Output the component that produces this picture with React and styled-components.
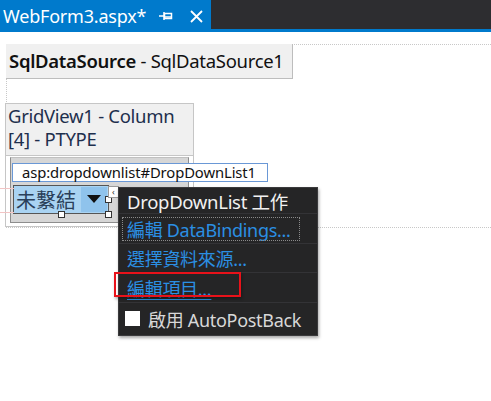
import React from "react";
import styled, { createGlobalStyle } from "styled-components";

const GlobalStyle = createGlobalStyle`
  html, body {
    margin: 0;
    padding: 0;
    background: #ffffff;
    font-family: "Noto Sans", "Noto Sans CJK TC", sans-serif;
  }
  #root {
    width: 491px;
    height: 401px;
    overflow: hidden;
  }
`;

const TabBar = styled.div`
  display: flex;
  height: 29px;
  background: #2d2d30;
`;

const Tab = styled.div`
  display: flex;
  align-items: center;
  width: 208px;
  padding-left: 3px;
  background: #007acc;
  color: #ffffff;
  font-size: 18px;
  letter-spacing: -0.2px;
`;

const TabTitle = styled.span`
  flex: 1;
  margin-top: 3px;
`;

const TabIcon = styled.span`
  display: flex;
  align-items: center;
  justify-content: center;
  width: ${(p) => p.w}px;
  height: 29px;
  margin-top: 3px;
`;

const BlueLine = styled.div`
  height: 3px;
  background: #007acc;
`;

const Surface = styled.div`
  position: relative;
  height: 369px;
  padding-top: 12px;
  box-sizing: border-box;
`;

const PageBody = styled.div`
  margin-left: 6px;
  height: 182px;
  border-top: 1px dotted #c8c8c8;
  border-left: 1px dotted #c8c8c8;
  border-bottom: 1px dotted #c8c8c8;
  display: flex;
  flex-direction: column;
  align-items: flex-start;
`;

const DataSourceBox = styled.div`
  margin: -1px 0 0 -1px;
  width: 283px;
  height: 34px;
  padding-left: 3px;
  display: flex;
  align-items: center;
  background: #f0f0f0;
  border-right: 1px solid #bdbdbd;
  border-bottom: 1px solid #bdbdbd;
  color: #111111;
  font-size: 18.5px;
  letter-spacing: -0.3px;
  white-space: nowrap;
  b {
    font-weight: 600;
  }
`;

const GridBox = styled.div`
  margin: 24px 0 0 -2px;
  width: 187px;
  height: 123px;
  border: 1px solid #c6c6c6;
  background: #ffffff;
  display: flex;
  flex-direction: column;
`;

const GridHeader = styled.div`
  height: 51px;
  padding: 0 0 0 2px;
  background: #f0f0f0;
  border-bottom: 1px solid #c6c6c6;
  color: #1e2f4d;
  font-size: 18.5px;
  line-height: 23px;
  letter-spacing: -0.3px;
  white-space: nowrap;
`;

const GridCell = styled.div`
  margin: 1px 4px 0 4px;
  height: 64px;
  background: #d6d6d6;
  border: 1px solid #8d8d8d;
  border-top-color: #c0c0c0;
  position: relative;
`;

const Dropdown = styled.div`
  position: absolute;
  left: 2px;
  top: 27px;
  width: 94px;
  height: 27px;
  border: 1px solid #555555;
  background: #a9d3f2;
  display: flex;
  align-items: center;
`;

const DropText = styled.span`
  flex: 1;
  padding-left: 2px;
  color: #2a3f5a;
  font-size: 20px;
  font-family: "Noto Sans CJK TC", sans-serif;
  line-height: 25px;
`;

const DropArrow = styled.span`
  width: 26px;
  height: 25px;
  margin-right: 1px;
  background: #8fc3ec;
  display: flex;
  align-items: center;
  justify-content: center;
`;

const Handle = styled.span`
  position: absolute;
  width: 5px;
  height: 5px;
  background: #ffffff;
  border: 1px solid #333333;
  left: ${(p) => p.x}px;
  top: ${(p) => p.y}px;
`;

const GuideLine = styled.div`
  position: absolute;
  left: 0;
  width: 14px;
  height: 1px;
  background: #f2c4c4;
  top: ${(p) => p.y}px;
`;

const Tooltip = styled.div`
  position: absolute;
  left: 12px;
  top: 131px;
  width: 256px;
  height: 19px;
  padding-left: 9px;
  box-sizing: border-box;
  background: #ffffff;
  border: 1px solid #6a98d6;
  font-size: 14.8px;
  line-height: 17px;
  letter-spacing: -0.1px;
  color: #111111;
  white-space: nowrap;
`;

const SmartTag = styled.div`
  position: absolute;
  left: 108px;
  top: 154px;
  width: 9px;
  height: 10px;
  background: #ffffff;
  border: 1px solid #9a9a9a;
  font-size: 9px;
  line-height: 9px;
  text-align: center;
  color: #333333;
`;

const Menu = styled.div`
  position: absolute;
  left: 118px;
  top: 155px;
  width: 198px;
  background: #252526;
  border: 1px solid #3a3a3c;
  box-shadow: 1px 2px 3px rgba(0, 0, 0, 0.35);
  display: flex;
  flex-direction: column;
  padding-bottom: 1px;
`;

const MenuHeader = styled.div`
  height: 25px;
  padding-left: 8px;
  display: flex;
  align-items: center;
  color: #f1f1f1;
  font-size: 18.5px;
  letter-spacing: -0.3px;
  border-bottom: 1px solid #333336;
  white-space: nowrap;
`;

const MenuItem = styled.div`
  position: relative;
  height: ${(p) => p.h}px;
  padding-left: 8px;
  display: flex;
  align-items: center;
  gap: 8px;
  color: ${(p) => (p.plain ? "#d8d8d8" : "#2b8fe3")};
  font-size: 18px;
  letter-spacing: -0.3px;
  border-bottom: ${(p) => (p.last ? "none" : "1px solid #333336")};
  text-decoration: ${(p) => (p.underline ? "underline" : "none")};
  text-underline-offset: 3px;
  white-space: nowrap;
`;

const FocusRect = styled.div`
  position: absolute;
  left: 3px;
  top: 3px;
  width: 176px;
  height: 22px;
  border: 1px dotted #8a8a8a;
  pointer-events: none;
`;

const CheckBox = styled.span`
  width: 15px;
  height: 15px;
  background: #ffffff;
  margin-left: -2px;
`;

const Highlight = styled.div`
  position: absolute;
  left: 114px;
  top: 240px;
  width: 123px;
  height: 21px;
  border: 2px solid #e8121a;
  box-shadow: 1px 2px 3px rgba(0, 0, 0, 0.3);
`;

function PinIcon() {
  return (
    <svg width="14" height="10" viewBox="0 0 14 10">
      <path d="M0 5h5" stroke="#fff" strokeWidth="1.5" />
      <path d="M5 1v8" stroke="#fff" strokeWidth="1.5" />
      <rect x="5.5" y="2.5" width="7" height="5" fill="none" stroke="#fff" strokeWidth="1.5" />
      <path d="M6 6h6.5" stroke="#fff" strokeWidth="1.5" />
    </svg>
  );
}

function CloseIcon() {
  return (
    <svg width="13" height="13" viewBox="0 0 13 13">
      <path d="M1 1l11 11M12 1L1 12" stroke="#fff" strokeWidth="1.8" />
    </svg>
  );
}

function ArrowDown() {
  return (
    <svg width="14" height="8" viewBox="0 0 14 8">
      <path d="M0 0h14L7 8z" fill="#111" />
    </svg>
  );
}

export default function App() {
  return (
    <>
      <GlobalStyle />
      <TabBar>
        <Tab>
          <TabTitle>WebForm3.aspx*</TabTitle>
          <TabIcon w={30}>
            <PinIcon />
          </TabIcon>
          <TabIcon w={30}>
            <CloseIcon />
          </TabIcon>
        </Tab>
      </TabBar>
      <BlueLine />
      <Surface>
        <PageBody>
          <DataSourceBox>
            <b>SqlDataSource</b>&nbsp;- SqlDataSource1
          </DataSourceBox>
          <GridBox>
            <GridHeader>
              GridView1 - Column
              <br />
              [4] - PTYPE
            </GridHeader>
            <GridCell>
              <Dropdown>
                <DropText>未繫結</DropText>
                <DropArrow>
                  <ArrowDown />
                </DropArrow>
              </Dropdown>
            </GridCell>
          </GridBox>
        </PageBody>
        <GuideLine y={156} />
        <GuideLine y={180} />
        <Handle x={58} y={179} />
        <Handle x={105} y={179} />
        <Handle x={105} y={164} />
        <Tooltip>asp:dropdownlist#DropDownList1</Tooltip>
        <SmartTag>‹</SmartTag>
        <Menu>
          <MenuHeader>DropDownList 工作</MenuHeader>
          <MenuItem h={29}>
            <FocusRect />
            編輯 DataBindings...
          </MenuItem>
          <MenuItem h={28}>選擇資料來源...</MenuItem>
          <MenuItem h={29} underline>
            編輯項目...
          </MenuItem>
          <MenuItem h={31} plain last>
            <CheckBox />
            啟用 AutoPostBack
          </MenuItem>
        </Menu>
        <Highlight />
      </Surface>
    </>
  );
}
